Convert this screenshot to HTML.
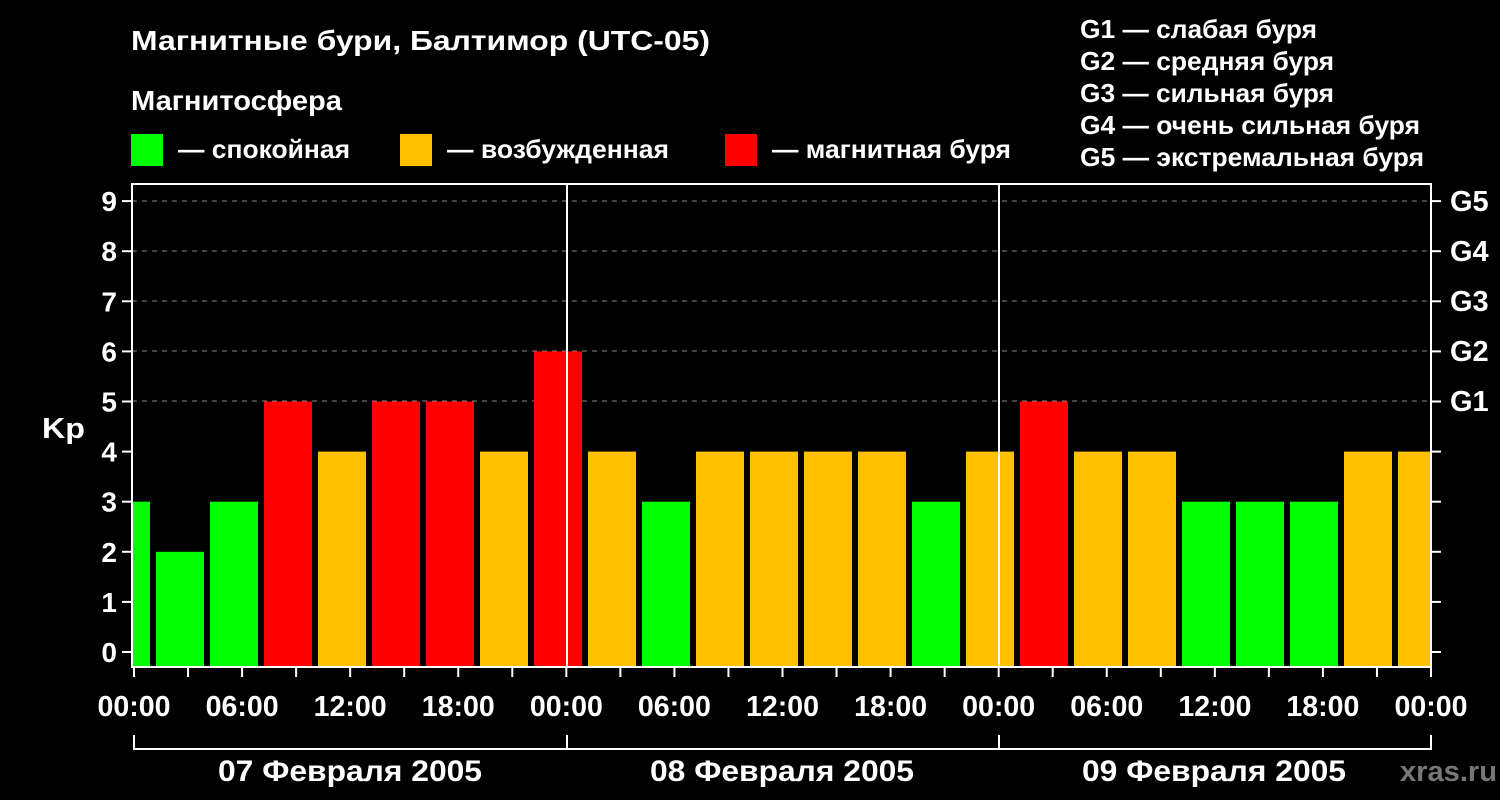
<!DOCTYPE html>
<html><head><meta charset="utf-8"><style>
html,body{margin:0;padding:0;background:#000;width:1500px;height:800px;overflow:hidden}
svg{display:block}
text{font-family:"Liberation Sans",sans-serif;font-weight:bold;fill:#fff}
</style></head><body>
<svg width="1500" height="800" xmlns="http://www.w3.org/2000/svg">
<text x="131" y="50" font-size="28" textLength="579" lengthAdjust="spacingAndGlyphs">Магнитные бури, Балтимор (UTC-05)</text>
<text x="131" y="110" font-size="28" textLength="211" lengthAdjust="spacingAndGlyphs">Магнитосфера</text>
<rect x="131" y="134" width="32" height="32" fill="#00ff00"/>
<text x="178" y="158" font-size="26" textLength="172" lengthAdjust="spacingAndGlyphs">— спокойная</text>
<rect x="400" y="134" width="32" height="32" fill="#ffc000"/>
<text x="447" y="158" font-size="26" textLength="222" lengthAdjust="spacingAndGlyphs">— возбужденная</text>
<rect x="725" y="134" width="32" height="32" fill="#ff0000"/>
<text x="772" y="158" font-size="26" textLength="239" lengthAdjust="spacingAndGlyphs">— магнитная буря</text>
<g font-size="26">
<text x="1080" y="38" textLength="237" lengthAdjust="spacingAndGlyphs">G1 — слабая буря</text>
<text x="1080" y="70" textLength="254" lengthAdjust="spacingAndGlyphs">G2 — средняя буря</text>
<text x="1080" y="102" textLength="254" lengthAdjust="spacingAndGlyphs">G3 — сильная буря</text>
<text x="1080" y="134" textLength="340" lengthAdjust="spacingAndGlyphs">G4 — очень сильная буря</text>
<text x="1080" y="166" textLength="344" lengthAdjust="spacingAndGlyphs">G5 — экстремальная буря</text>
</g>
<defs><clipPath id="c"><rect x="132" y="184" width="1299" height="483"/></clipPath></defs>
<g stroke="#888" stroke-width="1" stroke-dasharray="5,5">
<line x1="132" y1="201" x2="1431" y2="201"/><line x1="132" y1="251" x2="1431" y2="251"/>
<line x1="132" y1="301" x2="1431" y2="301"/><line x1="132" y1="351" x2="1431" y2="351"/>
<line x1="132" y1="401" x2="1431" y2="401"/>
</g>
<g clip-path="url(#c)" id="bars"></g>
<g stroke="#fff" stroke-width="2">
<line x1="567" y1="183" x2="567" y2="668"/><line x1="999" y1="183" x2="999" y2="668"/>
<rect x="132" y="184" width="1299" height="483" fill="none"/>
</g>
<g id="ax" stroke="#fff" stroke-width="2"></g>
<g font-size="28" text-anchor="end" id="yl"></g>
<text x="42" y="438" font-size="29" textLength="43" lengthAdjust="spacingAndGlyphs">Kp</text>
<g font-size="29" id="gl">
<text x="1450" y="211">G5</text><text x="1450" y="261">G4</text><text x="1450" y="311">G3</text>
<text x="1450" y="361">G2</text><text x="1450" y="411">G1</text></g>
<g font-size="29" text-anchor="middle" id="xl"></g>
<g stroke="#fff" stroke-width="2" fill="none">
<polyline points="134,735 134,749 1431,749 1431,735"/>
<line x1="567" y1="735" x2="567" y2="749"/><line x1="999" y1="735" x2="999" y2="749"/>
</g>
<g font-size="30">
<text x="218" y="781" textLength="264" lengthAdjust="spacingAndGlyphs">07 Февраля 2005</text>
<text x="650" y="781" textLength="264" lengthAdjust="spacingAndGlyphs">08 Февраля 2005</text>
<text x="1082" y="781" textLength="264" lengthAdjust="spacingAndGlyphs">09 Февраля 2005</text>
</g>
<text x="1400" y="781" font-size="29" style="fill:#777" textLength="97" lengthAdjust="spacingAndGlyphs">xras.ru</text>
</svg>
<script>
var ns="http://www.w3.org/2000/svg";
function el(p,t,a,tx){var e=document.createElementNS(ns,t);for(var k in a)e.setAttribute(k,a[k]);if(tx)e.textContent=tx;document.getElementById(p).appendChild(e);}
var v=[3,2,3,5,4,5,5,4,6,4,3,4,4,4,4,3,4,5,4,4,3,3,3,4,4];
v.forEach(function(k,i){var c=k>=5?"#ff0000":k==4?"#ffc000":"#00ff00";var x=102+54*i;var y=652-k*50.1;el("bars","rect",{x:x,y:y,width:48,height:667-y,fill:c});});
for(var k=0;k<=9;k++){var y=652-k*50.1;el("ax","line",{x1:122,y1:y,x2:132,y2:y});el("ax","line",{x1:1431,y1:y,x2:1441,y2:y});el("yl","text",{x:117,y:y+10},""+k);}
var lab=["00:00","06:00","12:00","18:00"];
for(var i=0;i<=24;i++){var x=134+i*(1297/24);el("ax","line",{x1:x,y1:667,x2:x,y2:677});if(i%2==0){var s=i==24?"00:00":lab[(i/2)%4];el("xl","text",{x:x,y:716,textLength:73,lengthAdjust:"spacingAndGlyphs"},s);}}
</script>
</body></html>
